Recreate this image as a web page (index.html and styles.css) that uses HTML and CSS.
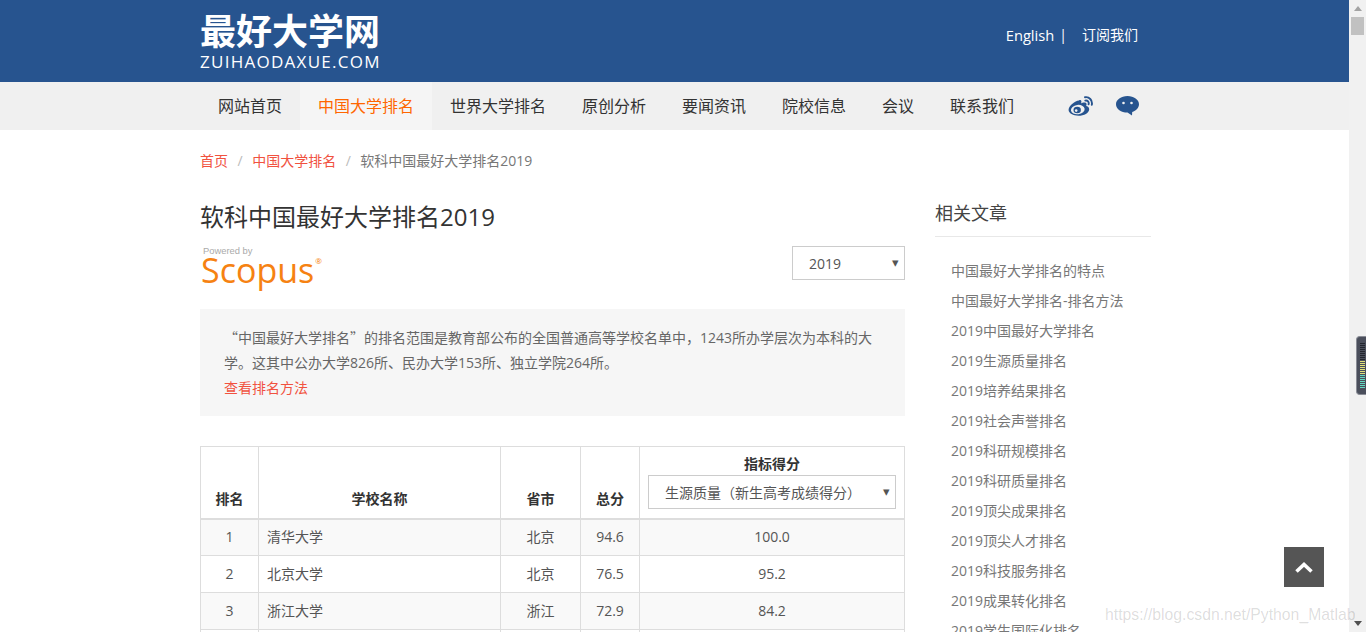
FILE: index.html
```html
<!DOCTYPE html>
<html lang="zh">
<head>
<meta charset="utf-8">
<title>软科中国最好大学排名2019</title>
<link rel="stylesheet" href="styles.css">
</head>
<body>
<div class="page">
  <header class="top">
    <div class="wrap top-in">
      <a class="logo">
        <span class="logo-cn">最好大学网</span>
        <span class="logo-en">ZUIHAODAXUE.COM</span>
      </a>
      <div class="top-links">
        <a class="lang">English</a><span class="sep">|</span><a>订阅我们</a>
      </div>
    </div>
  </header>
  <nav class="nav">
    <div class="wrap nav-in">
      <ul class="menu">
        <li>网站首页</li>
        <li class="active">中国大学排名</li>
        <li>世界大学排名</li>
        <li>原创分析</li>
        <li>要闻资讯</li>
        <li>院校信息</li>
        <li>会议</li>
        <li>联系我们</li>
      </ul>
      <div class="social">
        <svg class="ic-weibo" width="26" height="20" viewBox="0 0 26 20">
          <path fill="#27548f" d="M11 4.6C7 5 1 9.6.6 13.6.3 17.500 5.500 19.800 10.400 19.800c5.600 0 10.800-3 10.800-6.600 0-2.200-2.100-2.900-3-3.100.5-1.200.6-2.400-.2-3-1.200-1-3.700-.2-4.900.3.400-1.300.5-2.700-.3-3.100-.5-.3-1.200-.4-1.800.3z"/>
          <ellipse cx="9.800" cy="13.600" rx="6.900" ry="4.700" fill="#f0f0f0" transform="rotate(-8 9.800 13.600)"/>
          <ellipse cx="9.200" cy="14" rx="3.700" ry="3.200" fill="#27548f"/>
          <circle cx="8.200" cy="14.600" r="1.300" fill="#f0f0f0"/>
          <path fill="none" stroke="#27548f" stroke-width="1.900" stroke-linecap="round" d="M17 1.300c4-.8 7.800 2.800 6.800 7.500M17.300 4.600c2.300-.5 3.900 1.500 3.300 3.700"/>
        </svg>
        <svg class="ic-chat" width="23" height="20" viewBox="0 0 23 20">
          <path fill="#27548f" d="M11.500 0C5.100 0 0 3.700 0 8.300c0 4.600 5.100 8.300 11.500 8.300l4.500 3 .2-3.600C20 15 23 11.900 23 8.300 23 3.700 17.900 0 11.500 0z"/>
          <circle cx="7.500" cy="7" r="1.300" fill="#f0f0f0"/>
          <circle cx="15.500" cy="7" r="1.300" fill="#f0f0f0"/>
        </svg>
      </div>
    </div>
  </nav>
  <div class="wrap">
    <ol class="crumb">
      <li><a>首页</a></li>
      <li class="slash">/</li>
      <li><a>中国大学排名</a></li>
      <li class="slash">/</li>
      <li class="cur">软科中国最好大学排名2019</li>
    </ol>
    <div class="columns">
      <main class="main">
        <h1 class="title">软科中国最好大学排名2019</h1>
        <div class="brand-row">
          <div class="scopus">
            <span class="powered">Powered by</span>
            <span class="scopus-name">Scopus<sup class="reg">®</sup></span>
          </div>
          <div class="select year">2019<span class="caret">▾</span></div>
        </div>
        <section class="notice">
          <p><span class="cjk">“</span>中国最好大学排名<span class="cjk">”</span>的排名范围是教育部公布的全国普通高等学校名单中，1243所办学层次为本科的大学。这其中公办大学826所、民办大学153所、独立学院264所。</p>
          <a>查看排名方法</a>
        </section>
        <table class="rank">
          <colgroup>
            <col class="c1"><col class="c2"><col class="c3"><col class="c4"><col class="c5">
          </colgroup>
          <thead>
            <tr>
              <th>排名</th>
              <th>学校名称</th>
              <th>省市</th>
              <th>总分</th>
              <th class="metric">
                <div class="metric-title">指标得分</div>
                <div class="select metric-select">生源质量（新生高考成绩得分）<span class="caret">▾</span></div>
              </th>
            </tr>
          </thead>
          <tbody>
            <tr class="odd"><td>1</td><td class="name">清华大学</td><td>北京</td><td>94.6</td><td>100.0</td></tr>
            <tr><td>2</td><td class="name">北京大学</td><td>北京</td><td>76.5</td><td>95.2</td></tr>
            <tr class="odd"><td>3</td><td class="name">浙江大学</td><td>浙江</td><td>72.9</td><td>84.2</td></tr>
            <tr><td>4</td><td class="name">上海交通大学</td><td>上海</td><td>72.1</td><td>90.0</td></tr>
          </tbody>
        </table>
      </main>
      <aside class="side">
        <h2 class="side-title">相关文章</h2>
        <ul class="side-list">
          <li>中国最好大学排名的特点</li>
          <li>中国最好大学排名-排名方法</li>
          <li>2019中国最好大学排名</li>
          <li>2019生源质量排名</li>
          <li>2019培养结果排名</li>
          <li>2019社会声誉排名</li>
          <li>2019科研规模排名</li>
          <li>2019科研质量排名</li>
          <li>2019顶尖成果排名</li>
          <li>2019顶尖人才排名</li>
          <li>2019科技服务排名</li>
          <li>2019成果转化排名</li>
          <li>2019学生国际化排名</li>
        </ul>
      </aside>
    </div>
  </div>
</div>
<div class="scrollbar">
  <span class="sb-up"></span>
  <span class="sb-thumb"></span>
  <span class="sb-down"></span>
</div>
<div class="handle"><span class="handle-bars"></span></div>
<a class="to-top">
  <svg width="18" height="12" viewBox="0 0 18 12"><path fill="none" stroke="#fff" stroke-width="3.600" d="M1.500 10.500 9 3.500l7.500 7"/></svg>
</a>
<div class="watermark">https://blog.csdn.net/Python_Matlab</div>
</body>
</html>
```
FILE: styles.css
```css
* { box-sizing: border-box; }
html, body { margin: 0; height: 100%; overflow: hidden; }
body {
  display: flex;
  font-family: "Open Sans", "Noto Sans CJK SC", sans-serif;
  font-size: 14px;
  color: #333;
  background: #fff;
}
ul, ol { list-style: none; margin: 0; padding: 0; }
.cjk { font-family: "Noto Sans CJK SC", sans-serif; }
.page { flex: 1; min-width: 0; height: 100%; overflow: hidden; }
.wrap { width: 1349px; padding: 0 198px 0 200px; }

/* header */
.top { height: 82px; background: #27548f; color: #fff; }
.top-in { display: flex; justify-content: space-between; }
.logo { display: flex; flex-direction: column; width: 181px; padding-top: 10px; }
.logo-cn { font-size: 36px; line-height: 43px; font-weight: 700; white-space: nowrap; }
.logo-en { font-size: 17px; line-height: 18px; letter-spacing: 1.27px; font-weight: 500; white-space: nowrap; }
.top-links { display: flex; padding: 25px 13px 0 0; font-size: 14px; line-height: 20px; }
.lang { font-size: 14.7px; }
.sep { margin: 0 15px 0 5px; }

/* nav */
.nav { height: 48px; background: #f0f0f0; }
.nav-in { display: flex; justify-content: space-between; }
.menu { display: flex; }
.menu li { padding: 0 18px; font-size: 16px; line-height: 48px; color: #333; }
.menu .active { color: #f60; background: #f5f5f5; }
.social { display: flex; gap: 22px; padding: 14px 12px 0 0; align-items: flex-start; }

/* breadcrumb */
.crumb { display: flex; gap: 9.5px; padding-top: 21px; line-height: 20px; color: #777; }
.crumb a { color: #f1523f; }
.slash { color: #bbb; }

/* columns */
.columns { display: flex; gap: 30px; }
.main { width: 705px; }
.side { width: 216px; }

.title { margin: 0; padding-top: 29px; font-size: 24px; line-height: 34px; font-weight: 400; color: #333; }

.brand-row { display: flex; justify-content: space-between; align-items: flex-start; height: 63px; margin-top: 12px; }
.scopus { display: flex; flex-direction: column; padding-left: 1px; margin-top: -1px; }
.powered { font-size: 9.4px; line-height: 11px; padding-left: 2px; color: #aaa; font-family: "Liberation Sans", sans-serif; }
.scopus-name { margin-top: -2px; font-size: 34px; line-height: 32px; color: #f68212; font-family: "Open Sans", sans-serif; }
.reg { font-size: 8px; line-height: 0; vertical-align: 19px; margin-left: 1px; }

.select { position: relative; border: 1px solid #ccc; background: #fff; color: #555; }
.caret { position: absolute; right: 5px; top: 5px; font-size: 13px; line-height: 20px; color: #555; }
.year { width: 113px; height: 34px; padding: 0 16px; line-height: 33px; }

/* notice */
.notice { height: 107px; padding: 16px 24px 0; background: #f6f6f6; line-height: 25px; color: #666; }
.notice p { margin: 0; }
.notice a { color: #f1523f; }

/* table */
.rank { width: 704px; margin-top: 30px; border-collapse: collapse; table-layout: fixed; border: 1px solid #ddd; }
.c1 { width: 58px; }
.c2 { width: 242px; }
.c3 { width: 80px; }
.c4 { width: 59px; }
.c5 { width: 265px; }
.rank th, .rank td { border: 1px solid #ddd; text-align: center; }
.rank th { height: 72px; border-bottom-width: 2px; padding: 0 0 9px; vertical-align: bottom; font-size: 14px; line-height: 20px; font-weight: 700; color: #333; }
.rank td { height: 37px; padding: 0; line-height: 20px; color: #555; }
.rank td.name { text-align: left; padding-left: 8px; }
.odd td { background: #f9f9f9; }
.rank th.metric { padding: 0 8px 9px; }
.metric-title { line-height: 18px; padding-bottom: 2px; }
.metric-select { height: 34px; padding-right: 18px; font-weight: 400; font-size: 14px; line-height: 33px; }

/* sidebar */
.side-title { margin: 0; padding: 29px 0 10px; font-size: 18px; line-height: 26px; font-weight: 400; color: #444; border-bottom: 1px solid #e8e8e8; }
.side-list { padding: 19px 0 0 16px; }
.side-list li { line-height: 30px; color: #777; white-space: nowrap; }

/* fake scrollbar and overlays */
.scrollbar { position: relative; width: 17px; height: 100%; background: #f1f1f1; flex: none; }
.sb-up { position: absolute; top: 6px; left: 5px; border: 4px solid transparent; border-top: 0; border-bottom: 5px solid #a3a3a3; }
.sb-thumb { position: absolute; top: 17px; left: 2px; width: 13px; height: 18px; background: #c1c1c1; }
.sb-down { position: absolute; bottom: 6px; left: 5px; border: 4px solid transparent; border-bottom: 0; border-top: 5px solid #505050; }
.handle { position: absolute; left: 1356px; top: 336px; width: 10px; height: 59px; padding: 6px 0 0 3px; background: #4b4f5c; border: 1px solid #8a8d96; border-right: 0; border-radius: 4px 0 0 4px; }
.handle-bars { display: block; width: 5px; height: 46px; background:
  repeating-linear-gradient(to bottom, transparent 0 1px, #4b4f5c 1px 2px),
  linear-gradient(to bottom, #23262e 0 18px, #dfe07a 18px 32px, #63d9c0 32px 46px); }
.to-top { position: absolute; left: 1284px; top: 547px; width: 40px; height: 40px; display: flex; align-items: center; justify-content: center; background: #555; }
.watermark { position: absolute; left: 1105px; top: 605px; font-family: "Liberation Sans", sans-serif; font-size: 15.75px; line-height: 20px; color: rgba(0, 0, 0, .14); white-space: nowrap; }
```
